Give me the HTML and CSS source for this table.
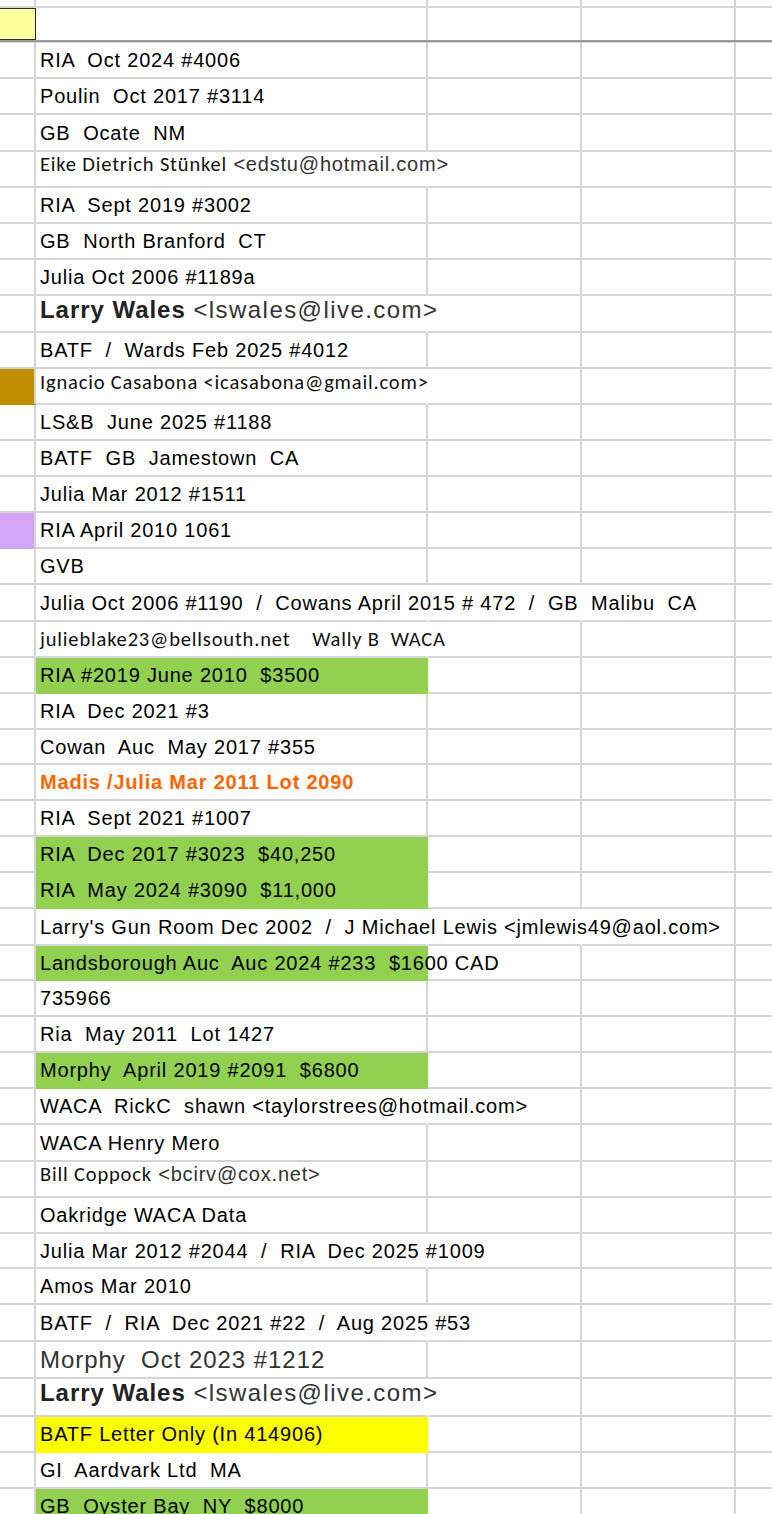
FILE: index.html
```html
<!DOCTYPE html>
<html>
<head>
<meta charset="utf-8">
<link rel="stylesheet" href="styles.css">
</head>
<body>
<div class="sheet">
  <div class="row top-row"><div class="c a"></div><div class="c b"></div><div class="c c3"></div><div class="c d"></div><div class="c e"></div></div>
  <div class="row head-row"><div class="c a sel"></div><div class="c b"></div><div class="c c3"></div><div class="c d"></div><div class="c e"></div></div>
  <div class="divider"></div>

  <div class="row"><div class="c a"></div><div class="c b"><span class="t">RIA  Oct 2024 #4006</span></div><div class="c c3"></div><div class="c d"></div><div class="c e"></div></div>
  <div class="row"><div class="c a"></div><div class="c b"><span class="t">Poulin  Oct 2017 #3114</span></div><div class="c c3"></div><div class="c d"></div><div class="c e"></div></div>
  <div class="row h37"><div class="c a"></div><div class="c b"><span class="t">GB  Ocate  NM</span></div><div class="c c3"></div><div class="c d"></div><div class="c e"></div></div>
  <div class="row"><div class="c a"></div><div class="c b nb up"><span class="t"><span class="cal">Eike Dietrich Stünkel</span> <span class="mail">&lt;edstu@hotmail.com&gt;</span></span></div><div class="c c3"></div><div class="c d"></div><div class="c e"></div></div>
  <div class="row"><div class="c a"></div><div class="c b"><span class="t">RIA  Sept 2019 #3002</span></div><div class="c c3"></div><div class="c d"></div><div class="c e"></div></div>
  <div class="row"><div class="c a"></div><div class="c b"><span class="t">GB  North Branford  CT</span></div><div class="c c3"></div><div class="c d"></div><div class="c e"></div></div>
  <div class="row"><div class="c a"></div><div class="c b"><span class="t">Julia Oct 2006 #1189a</span></div><div class="c c3"></div><div class="c d"></div><div class="c e"></div></div>
  <div class="row h37"><div class="c a"></div><div class="c b nb up2"><span class="t big"><b class="name">Larry Wales</b> <span class="mail wide">&lt;lswales@live.com&gt;</span></span></div><div class="c c3"></div><div class="c d"></div><div class="c e"></div></div>
  <div class="row"><div class="c a"></div><div class="c b"><span class="t">BATF  /  Wards Feb 2025 #4012</span></div><div class="c c3"></div><div class="c d"></div><div class="c e"></div></div>
  <div class="row"><div class="c a gold"></div><div class="c b nb up3"><span class="t cal">Ignacio Casabona &lt;icasabona@gmail.com&gt;</span></div><div class="c c3"></div><div class="c d"></div><div class="c e"></div></div>
  <div class="row"><div class="c a"></div><div class="c b"><span class="t">LS&amp;B  June 2025 #1188</span></div><div class="c c3"></div><div class="c d"></div><div class="c e"></div></div>
  <div class="row"><div class="c a"></div><div class="c b"><span class="t">BATF  GB  Jamestown  CA</span></div><div class="c c3"></div><div class="c d"></div><div class="c e"></div></div>
  <div class="row"><div class="c a"></div><div class="c b"><span class="t">Julia Mar 2012 #1511</span></div><div class="c c3"></div><div class="c d"></div><div class="c e"></div></div>
  <div class="row"><div class="c a lav"></div><div class="c b"><span class="t">RIA April 2010 1061</span></div><div class="c c3"></div><div class="c d"></div><div class="c e"></div></div>
  <div class="row"><div class="c a"></div><div class="c b"><span class="t">GVB</span></div><div class="c c3"></div><div class="c d"></div><div class="c e"></div></div>
  <div class="row h37"><div class="c a"></div><div class="c b nb"><span class="t">Julia Oct 2006 #1190  /  Cowans April 2015 # 472  /  GB  Malibu  CA</span></div><div class="c c3 nb"></div><div class="c d"></div><div class="c e"></div></div>
  <div class="row"><div class="c a"></div><div class="c b nb"><span class="t cal">julieblake23@bellsouth.net    Wally B  WACA</span></div><div class="c c3"></div><div class="c d"></div><div class="c e"></div></div>
  <div class="row"><div class="c a"></div><div class="c b green"><span class="t">RIA #2019 June 2010  $3500</span></div><div class="c c3"></div><div class="c d"></div><div class="c e"></div></div>
  <div class="row"><div class="c a"></div><div class="c b"><span class="t">RIA  Dec 2021 #3</span></div><div class="c c3"></div><div class="c d"></div><div class="c e"></div></div>
  <div class="row h35"><div class="c a"></div><div class="c b"><span class="t">Cowan  Auc  May 2017 #355</span></div><div class="c c3"></div><div class="c d"></div><div class="c e"></div></div>
  <div class="row"><div class="c a"></div><div class="c b"><span class="t orange">Madis /Julia Mar 2011 Lot 2090</span></div><div class="c c3"></div><div class="c d"></div><div class="c e"></div></div>
  <div class="row"><div class="c a"></div><div class="c b"><span class="t">RIA  Sept 2021 #1007</span></div><div class="c c3"></div><div class="c d"></div><div class="c e"></div></div>
  <div class="row"><div class="c a"></div><div class="c b green"><span class="t">RIA  Dec 2017 #3023  $40,250</span></div><div class="c c3"></div><div class="c d"></div><div class="c e"></div></div>
  <div class="row"><div class="c a"></div><div class="c b green"><span class="t">RIA  May 2024 #3090  $11,000</span></div><div class="c c3"></div><div class="c d"></div><div class="c e"></div></div>
  <div class="row h37"><div class="c a"></div><div class="c b nb"><span class="t">Larry's Gun Room Dec 2002  /  J Michael Lewis &lt;jmlewis49@aol.com&gt;</span></div><div class="c c3 nb"></div><div class="c d"></div><div class="c e"></div></div>
  <div class="row h35"><div class="c a"></div><div class="c b green"><span class="t">Landsborough Auc  Auc 2024 #233  $1600 CAD</span></div><div class="c c3"></div><div class="c d"></div><div class="c e"></div></div>
  <div class="row"><div class="c a"></div><div class="c b"><span class="t">735966</span></div><div class="c c3"></div><div class="c d"></div><div class="c e"></div></div>
  <div class="row"><div class="c a"></div><div class="c b"><span class="t">Ria  May 2011  Lot 1427</span></div><div class="c c3"></div><div class="c d"></div><div class="c e"></div></div>
  <div class="row"><div class="c a"></div><div class="c b green"><span class="t">Morphy  April 2019 #2091  $6800</span></div><div class="c c3"></div><div class="c d"></div><div class="c e"></div></div>
  <div class="row"><div class="c a"></div><div class="c b nb"><span class="t">WACA  RickC  shawn &lt;taylorstrees@hotmail.com&gt;</span></div><div class="c c3"></div><div class="c d"></div><div class="c e"></div></div>
  <div class="row h37"><div class="c a"></div><div class="c b"><span class="t">WACA Henry Mero</span></div><div class="c c3"></div><div class="c d"></div><div class="c e"></div></div>
  <div class="row"><div class="c a"></div><div class="c b up"><span class="t"><span class="cal">Bill Coppock</span> <span class="mail">&lt;bcirv@cox.net&gt;</span></span></div><div class="c c3"></div><div class="c d"></div><div class="c e"></div></div>
  <div class="row"><div class="c a"></div><div class="c b"><span class="t">Oakridge WACA Data</span></div><div class="c c3"></div><div class="c d"></div><div class="c e"></div></div>
  <div class="row h35"><div class="c a"></div><div class="c b nb"><span class="t">Julia Mar 2012 #2044  /  RIA  Dec 2025 #1009</span></div><div class="c c3"></div><div class="c d"></div><div class="c e"></div></div>
  <div class="row"><div class="c a"></div><div class="c b"><span class="t">Amos Mar 2010</span></div><div class="c c3"></div><div class="c d"></div><div class="c e"></div></div>
  <div class="row h37"><div class="c a"></div><div class="c b nb"><span class="t">BATF  /  RIA  Dec 2021 #22  /  Aug 2025 #53</span></div><div class="c c3"></div><div class="c d"></div><div class="c e"></div></div>
  <div class="row h37"><div class="c a"></div><div class="c b"><span class="t big grey">Morphy  Oct 2023 #1212</span></div><div class="c c3"></div><div class="c d"></div><div class="c e"></div></div>
  <div class="row h38"><div class="c a"></div><div class="c b nb up2"><span class="t big"><b class="name">Larry Wales</b> <span class="mail wide">&lt;lswales@live.com&gt;</span></span></div><div class="c c3"></div><div class="c d"></div><div class="c e"></div></div>
  <div class="row"><div class="c a"></div><div class="c b yellow"><span class="t">BATF Letter Only (In 414906)</span></div><div class="c c3"></div><div class="c d"></div><div class="c e"></div></div>
  <div class="row"><div class="c a"></div><div class="c b"><span class="t">GI  Aardvark Ltd  MA</span></div><div class="c c3"></div><div class="c d"></div><div class="c e"></div></div>
  <div class="row"><div class="c a"></div><div class="c b green"><span class="t">GB  Oyster Bay  NY  $8000</span></div><div class="c c3"></div><div class="c d"></div><div class="c e"></div></div>
</div>
</body>
</html>
```

FILE: styles.css
```css
html, body {
  margin: 0;
  padding: 0;
  background: #ffffff;
}
body {
  width: 772px;
  height: 1514px;
  overflow: hidden;
  font-family: "Liberation Sans", Arial, Helvetica, sans-serif;
  font-size: 20px;
  color: #000;
}
.sheet {
  display: flex;
  flex-direction: column;
}
.row {
  display: grid;
  grid-template-columns: 36px 392px 154px 154px 36px;
  height: 36px;
  flex: none;
}
.row.h35 { height: 35px; }
.row.h37 { height: 37px; }
.row.h38 { height: 38px; }
.row.top-row { height: 8px; }
.row.head-row { height: 32px; }
.row.head-row .c { border-bottom: none; }
.divider {
  height: 3px;
  flex: none;
  border-top: 2px solid #9b9b9b;
  border-bottom: 1px solid #d2d2d2;
  box-sizing: border-box;
}
.c {
  box-sizing: border-box;
  border-right: 2px solid #d5d5d5;
  border-bottom: 2px solid #d5d5d5;
  min-width: 0;
}
.c.e { border-right: none; }
.c.a.sel {
  background: #ffff9f;
  border: 1.5px solid #2a2a2a;
  border-left: none;
}
.c.b {
  display: flex;
  align-items: center;
  padding-left: 4px;
  white-space: pre;
  overflow: visible;
  position: relative;
  z-index: 1;
}
.c.nb { border-right-color: transparent; }
.c.b.up { align-items: flex-start; padding-top: 0; }
.c.b.up .t { line-height: 24px; }
.c.b.up3 { align-items: flex-start; padding-top: 0; }
.c.b.up3 .t { line-height: 26px; }
.c.b.up2 { align-items: flex-start; padding-top: 0; }
.t {
  letter-spacing: 0.04em;
  line-height: 28px;
}
.t.big { font-size: 24px; color: #222; }
.t.grey { color: #333; }
.name { font-weight: bold; color: #222; }
.mail {
  font-family: "Liberation Sans", Arial, sans-serif;
  color: #333;
}
.mail.wide { letter-spacing: 0.06em; }
.cal {
  font-family: "Carlito", "Lato", sans-serif;
  font-size: 20.5px;
  letter-spacing: 0.04em;
  color: #111;
}
.orange { color: #ff6600; font-weight: bold; }
.green { background: #92d050; border-right-color: #92d050; border-bottom-color: #92d050; }
.yellow { background: #ffff00; border-right-color: #ffff00; border-bottom-color: #ffff00; }
.gold { background: #bf8f00; border-bottom-color: #bf8f00; }
.lav { background: #d3a5fa; border-bottom-color: #d3a5fa; }
```
